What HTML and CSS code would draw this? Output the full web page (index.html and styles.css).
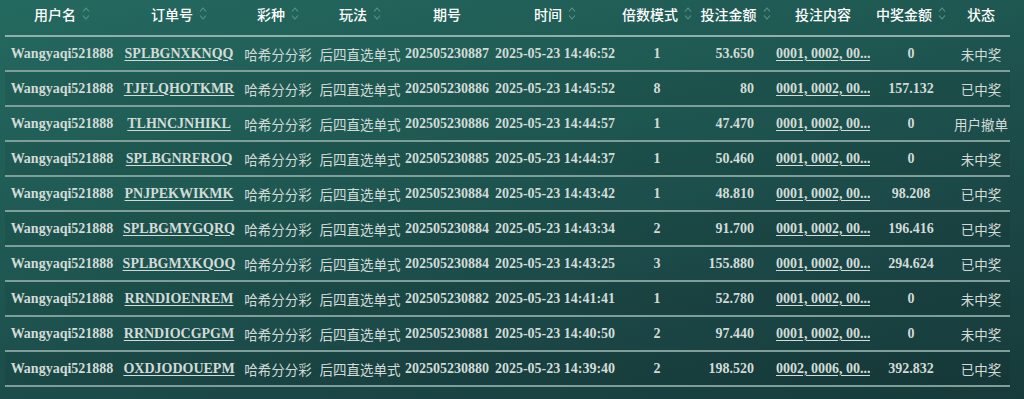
FILE: index.html
```html
<!DOCTYPE html>
<html lang="zh">
<head>
<meta charset="utf-8">
<link rel="stylesheet" href="styles.css">
</head>
<body>
<div class="wrap">
<table class="bets">
<colgroup>
<col class="w1"><col class="w2"><col class="w3"><col class="w4"><col class="w5"><col class="w6"><col class="w7"><col class="w8"><col class="w9"><col class="w10"><col class="w11">
</colgroup>
<thead>
<tr>
<th><span class="hc">用户名<svg class="sort" viewBox="0 0 8 14"><path d="M1 5 L4 1.5 L7 5 M1 9 L4 12.5 L7 9"/></svg></span></th>
<th><span class="hc">订单号<svg class="sort" viewBox="0 0 8 14"><path d="M1 5 L4 1.5 L7 5 M1 9 L4 12.5 L7 9"/></svg></span></th>
<th><span class="hc">彩种<svg class="sort" viewBox="0 0 8 14"><path d="M1 5 L4 1.5 L7 5 M1 9 L4 12.5 L7 9"/></svg></span></th>
<th><span class="hc">玩法<svg class="sort" viewBox="0 0 8 14"><path d="M1 5 L4 1.5 L7 5 M1 9 L4 12.5 L7 9"/></svg></span></th>
<th><span class="hc">期号</span></th>
<th><span class="hc">时间<svg class="sort" viewBox="0 0 8 14"><path d="M1 5 L4 1.5 L7 5 M1 9 L4 12.5 L7 9"/></svg></span></th>
<th><span class="hc">倍数模式<svg class="sort" viewBox="0 0 8 14"><path d="M1 5 L4 1.5 L7 5 M1 9 L4 12.5 L7 9"/></svg></span></th>
<th><span class="hc">投注金额<svg class="sort" viewBox="0 0 8 14"><path d="M1 5 L4 1.5 L7 5 M1 9 L4 12.5 L7 9"/></svg></span></th>
<th><span class="hc">投注内容</span></th>
<th><span class="hc">中奖金额<svg class="sort" viewBox="0 0 8 14"><path d="M1 5 L4 1.5 L7 5 M1 9 L4 12.5 L7 9"/></svg></span></th>
<th><span class="hc">状态</span></th>
</tr>
</thead>
<tbody>
<tr><td>Wangyaqi521888</td><td><a class="lnk">SPLBGNXKNQQ</a></td><td class="cjk">哈希分分彩</td><td class="cjk">后四直选单式</td><td>202505230887</td><td>2025-05-23 14:46:52</td><td>1</td><td class="amt">53.650</td><td><a class="lnk">0001, 0002, 00...</a></td><td>0</td><td class="cjk">未中奖</td></tr>
<tr><td>Wangyaqi521888</td><td><a class="lnk">TJFLQHOTKMR</a></td><td class="cjk">哈希分分彩</td><td class="cjk">后四直选单式</td><td>202505230886</td><td>2025-05-23 14:45:52</td><td>8</td><td class="amt">80</td><td><a class="lnk">0001, 0002, 00...</a></td><td>157.132</td><td class="cjk">已中奖</td></tr>
<tr><td>Wangyaqi521888</td><td><a class="lnk">TLHNCJNHIKL</a></td><td class="cjk">哈希分分彩</td><td class="cjk">后四直选单式</td><td>202505230886</td><td>2025-05-23 14:44:57</td><td>1</td><td class="amt">47.470</td><td><a class="lnk">0001, 0002, 00...</a></td><td>0</td><td class="cjk">用户撤单</td></tr>
<tr><td>Wangyaqi521888</td><td><a class="lnk">SPLBGNRFROQ</a></td><td class="cjk">哈希分分彩</td><td class="cjk">后四直选单式</td><td>202505230885</td><td>2025-05-23 14:44:37</td><td>1</td><td class="amt">50.460</td><td><a class="lnk">0001, 0002, 00...</a></td><td>0</td><td class="cjk">未中奖</td></tr>
<tr><td>Wangyaqi521888</td><td><a class="lnk">PNJPEKWIKMK</a></td><td class="cjk">哈希分分彩</td><td class="cjk">后四直选单式</td><td>202505230884</td><td>2025-05-23 14:43:42</td><td>1</td><td class="amt">48.810</td><td><a class="lnk">0001, 0002, 00...</a></td><td>98.208</td><td class="cjk">已中奖</td></tr>
<tr><td>Wangyaqi521888</td><td><a class="lnk">SPLBGMYGQRQ</a></td><td class="cjk">哈希分分彩</td><td class="cjk">后四直选单式</td><td>202505230884</td><td>2025-05-23 14:43:34</td><td>2</td><td class="amt">91.700</td><td><a class="lnk">0001, 0002, 00...</a></td><td>196.416</td><td class="cjk">已中奖</td></tr>
<tr><td>Wangyaqi521888</td><td><a class="lnk">SPLBGMXKQOQ</a></td><td class="cjk">哈希分分彩</td><td class="cjk">后四直选单式</td><td>202505230884</td><td>2025-05-23 14:43:25</td><td>3</td><td class="amt">155.880</td><td><a class="lnk">0001, 0002, 00...</a></td><td>294.624</td><td class="cjk">已中奖</td></tr>
<tr><td>Wangyaqi521888</td><td><a class="lnk">RRNDIOENREM</a></td><td class="cjk">哈希分分彩</td><td class="cjk">后四直选单式</td><td>202505230882</td><td>2025-05-23 14:41:41</td><td>1</td><td class="amt">52.780</td><td><a class="lnk">0001, 0002, 00...</a></td><td>0</td><td class="cjk">未中奖</td></tr>
<tr><td>Wangyaqi521888</td><td><a class="lnk">RRNDIOCGPGM</a></td><td class="cjk">哈希分分彩</td><td class="cjk">后四直选单式</td><td>202505230881</td><td>2025-05-23 14:40:50</td><td>2</td><td class="amt">97.440</td><td><a class="lnk">0001, 0002, 00...</a></td><td>0</td><td class="cjk">未中奖</td></tr>
<tr><td>Wangyaqi521888</td><td><a class="lnk">OXDJODOUEPM</a></td><td class="cjk">哈希分分彩</td><td class="cjk">后四直选单式</td><td>202505230880</td><td>2025-05-23 14:39:40</td><td>2</td><td class="amt">198.520</td><td><a class="lnk">0002, 0006, 00...</a></td><td>392.832</td><td class="cjk">已中奖</td></tr>
</tbody>
</table>
</div>
</body>
</html>
```
FILE: styles.css
```css
html, body {
  margin: 0;
  padding: 0;
  height: 100%;
}
body {
  background: linear-gradient(165deg, #24695f 0%, #1f5a53 35%, #1b4746 70%, #173a3a 100%);
  font-family: "Liberation Serif", "Noto Sans CJK SC", serif;
  color: #d2dbd8;
  overflow: hidden;
}
.wrap {
  padding: 0 14px 0 5px;
}
.bets {
  width: 1005px;
  table-layout: fixed;
  border-collapse: collapse;
}
.w1 { width: 114px; }
.w2 { width: 120px; }
.w3 { width: 78px; }
.w4 { width: 86px; }
.w5 { width: 88px; }
.w6 { width: 128px; }
.w7 { width: 76px; }
.w8 { width: 81px; }
.w9 { width: 94px; }
.w10 { width: 82px; }
.w11 { width: 58px; }

th {
  height: 35px;
  padding: 0;
  font-family: "Noto Sans CJK SC", sans-serif;
  font-weight: 500;
  font-size: 14px;
  color: #ffffff;
  text-align: center;
  vertical-align: middle;
  border-bottom: 2px solid #8fb0ab;
  white-space: nowrap;
}
th .hc {
  display: inline-flex;
  align-items: center;
  gap: 6px;
  position: relative;
  top: -4px;
}
.sort {
  width: 8px;
  height: 15px;
  fill: none;
  stroke: #5a968d;
  stroke-width: 1.1;
}
td {
  height: 33px;
  padding: 0;
  font-size: 14px;
  font-weight: bold;
  text-align: center;
  vertical-align: middle;
  border-bottom: 2px solid #7f9e9a;
  white-space: nowrap;
  overflow: hidden;
}
tbody tr:nth-child(even) td {
  background: rgba(0, 0, 0, 0.06);
}
td.cjk {
  font-family: "Noto Sans CJK SC", sans-serif;
  font-weight: 400;
  font-size: 13.5px;
}
td.amt {
  text-align: right;
  padding-right: 22px;
}
.lnk {
  color: #d2dbd8;
  text-decoration: underline;
  text-underline-offset: 2px;
}
```
